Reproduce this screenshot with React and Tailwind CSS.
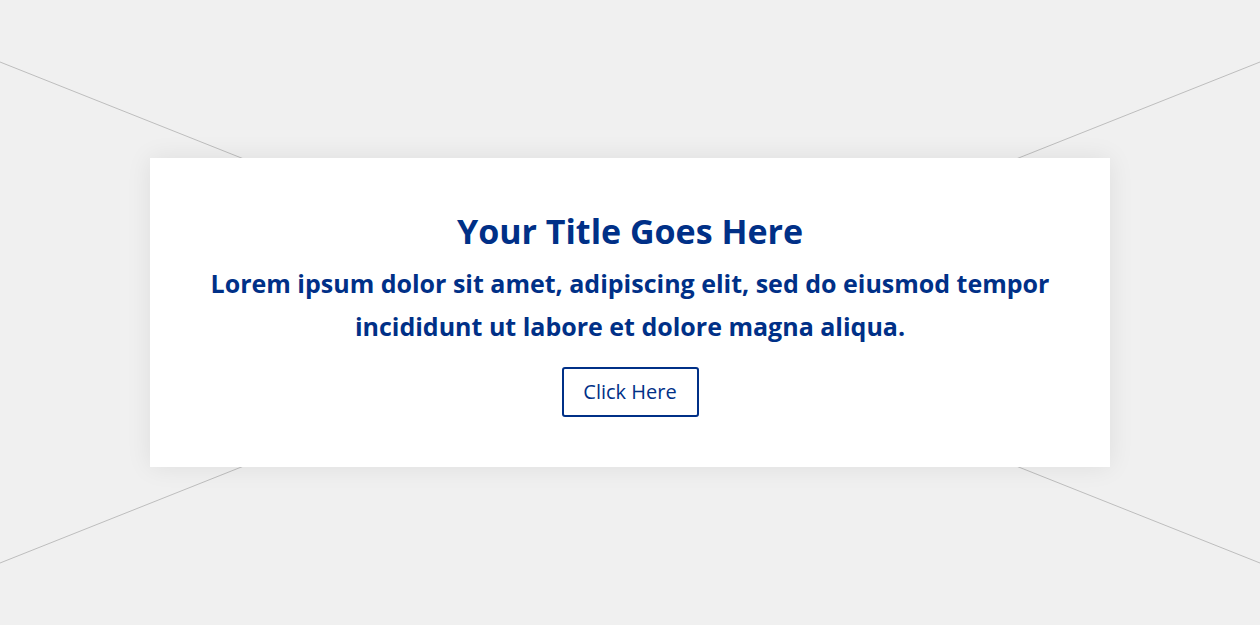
import React from 'react';

export default function App() {
    return (
        <div className="relative w-full h-[625px] bg-[#f0f0f0] overflow-hidden flex items-center justify-center" style={{ fontFamily: '"Open Sans", sans-serif' }}>
            {/* placeholder cross lines */}
            <svg className="absolute inset-0 w-full h-full pointer-events-none" viewBox="0 0 1260 625" preserveAspectRatio="none">
                <line x1="0" y1="62" x2="1260" y2="563" stroke="#bdbdbd" strokeWidth="1" />
                <line x1="1260" y1="62" x2="0" y2="563" stroke="#bdbdbd" strokeWidth="1" />
            </svg>

            <div className="relative w-[960px] h-[309px] bg-white shadow-[0_0_24px_rgba(0,0,0,0.08)] px-[50px] pt-[53px] flex flex-col items-center text-center text-[#003087]">
                <h1 className="text-[34px] leading-[40px] font-bold">Your Title Goes Here</h1>
                <p className="mt-[11px] text-[25px] leading-[43px] font-bold">
                    Lorem ipsum dolor sit amet, adipiscing elit, sed do eiusmod tempor incididunt ut labore et dolore magna aliqua.
                </p>
                <button className="mt-[19px] w-[137px] h-[50px] border-2 border-[#003087] rounded-[3px] text-[20px] text-[#003087] bg-white">
                    Click Here
                </button>
            </div>
        </div>
    );
}
